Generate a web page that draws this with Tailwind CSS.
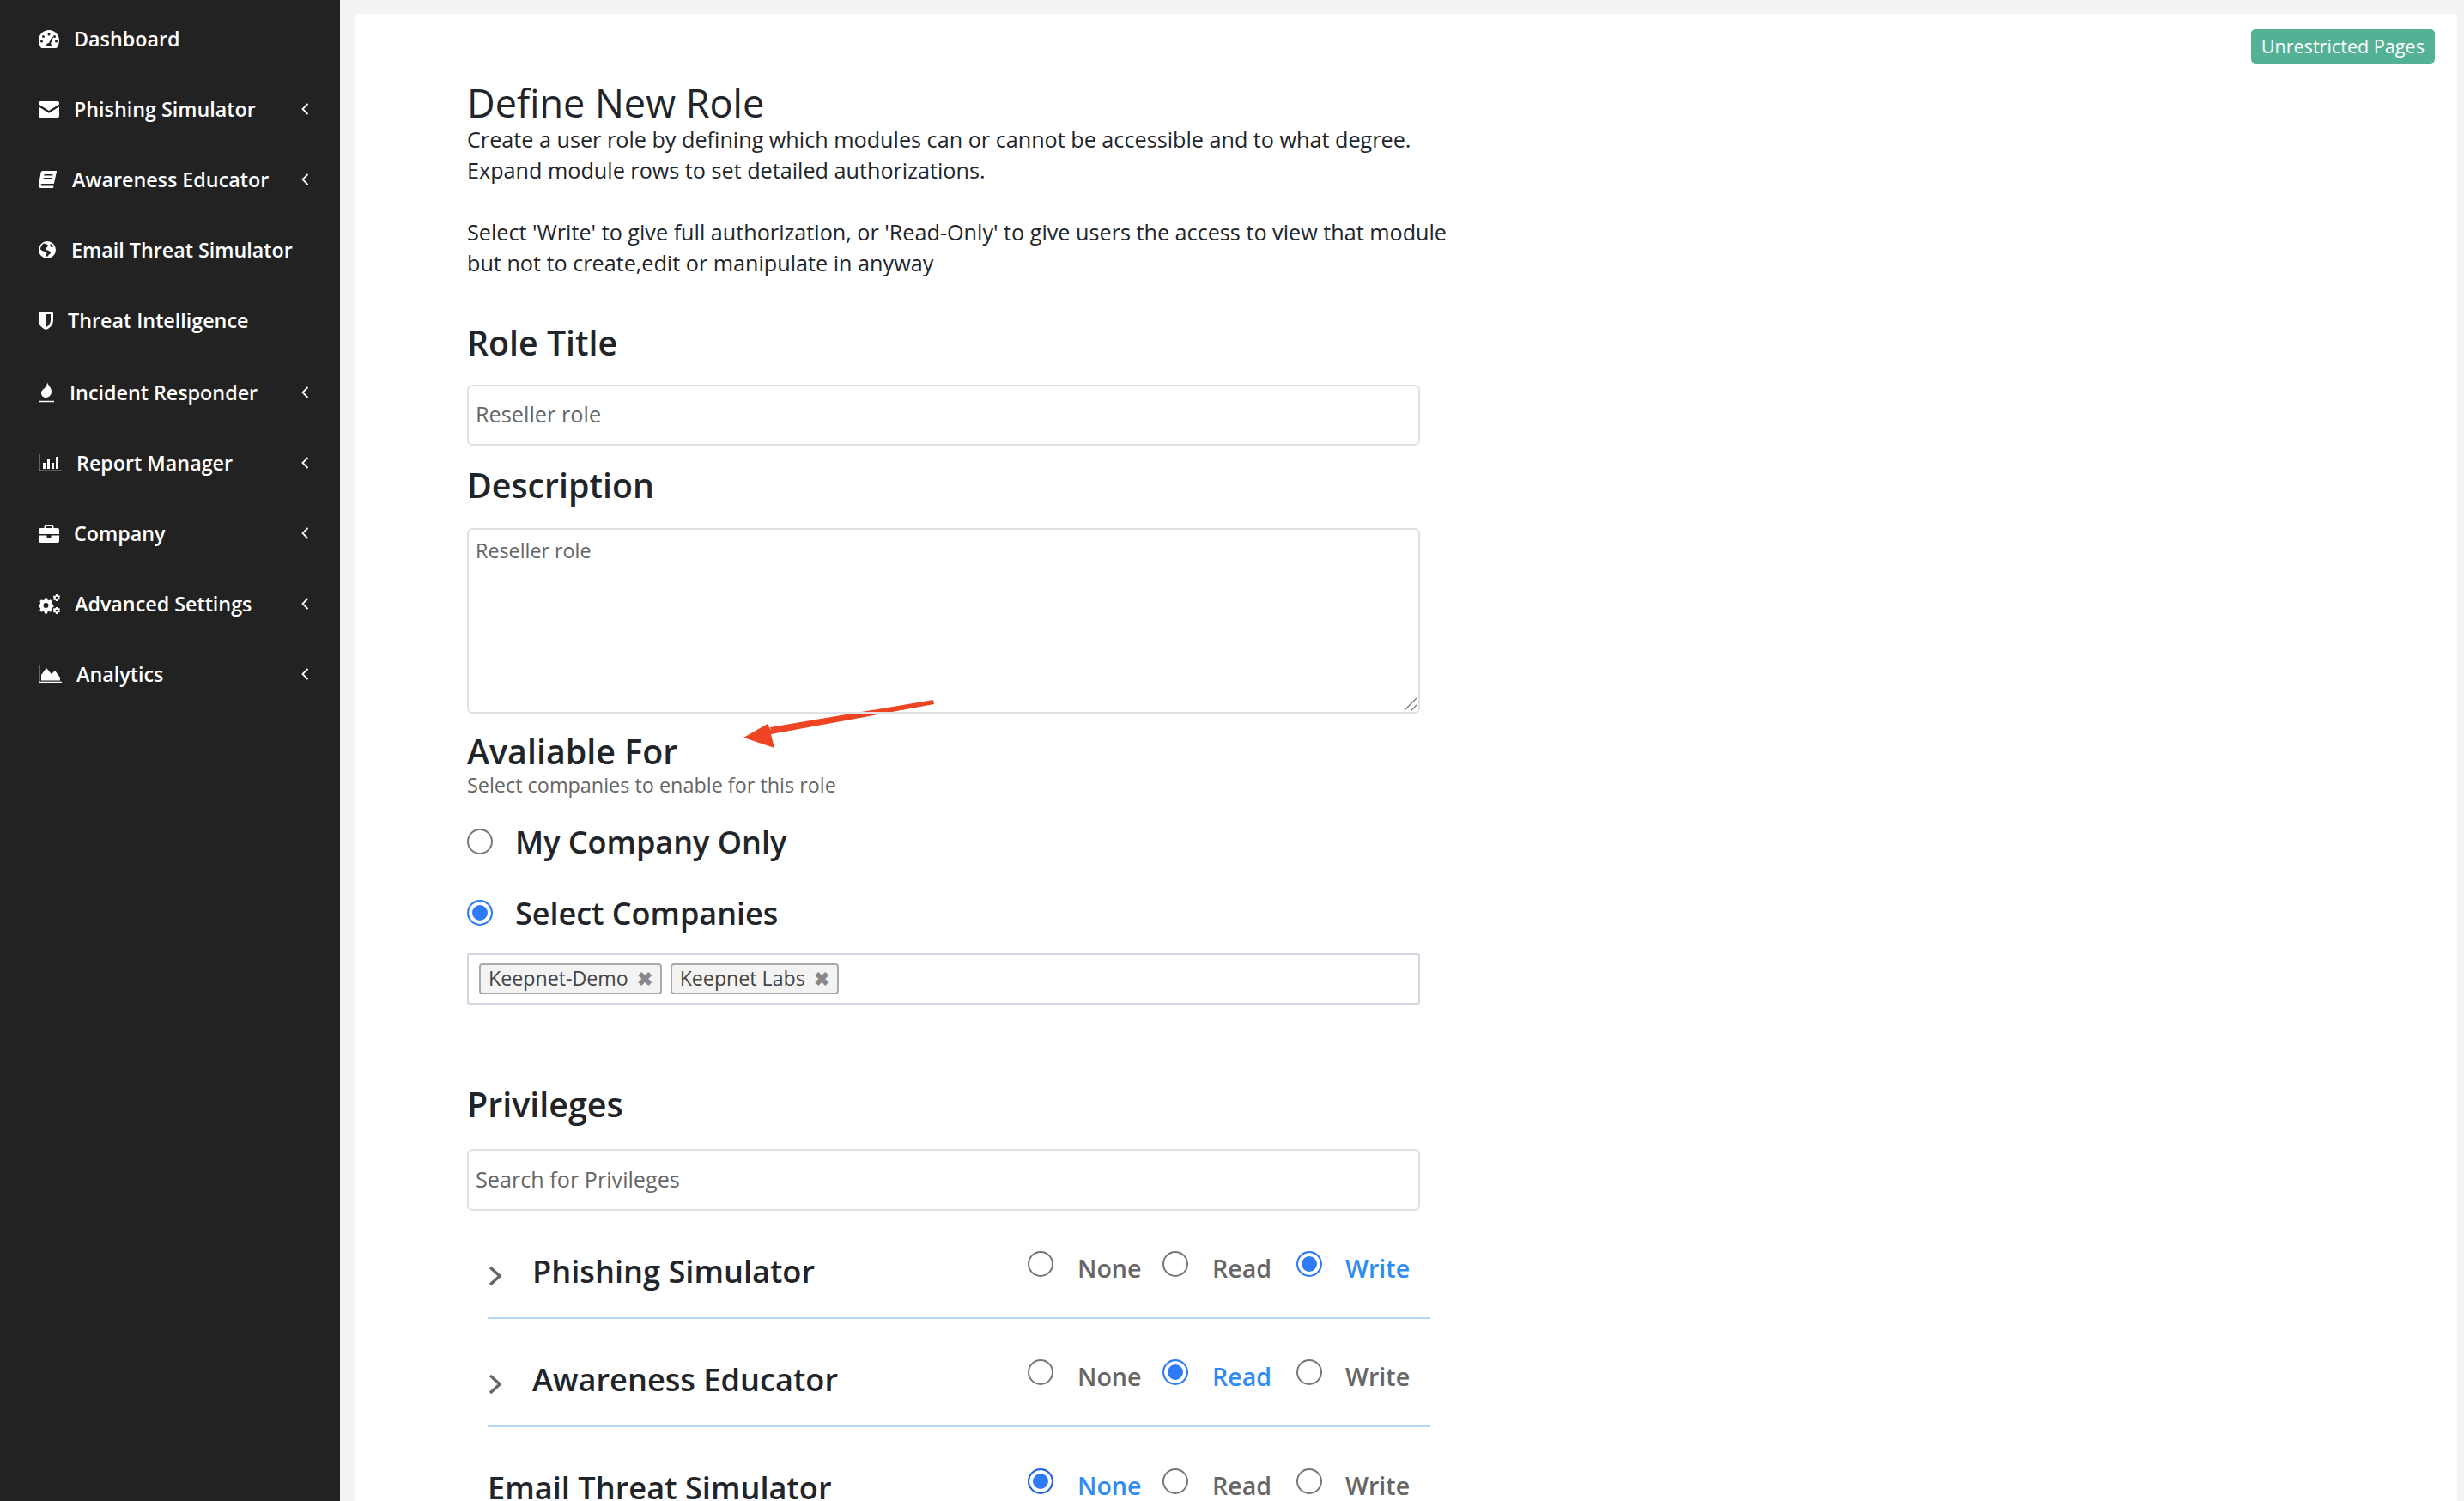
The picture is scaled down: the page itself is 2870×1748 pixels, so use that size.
<!DOCTYPE html>
<html lang="en">
<head>
    <meta charset="UTF-8">
    <title>Define New Role</title>
    <script src="https://cdn.jsdelivr.net/npm/@tailwindcss/browser@4"></script>
</head>
<body class="bg-[#f3f3f3] h-screen overflow-hidden flex font-['Open_Sans',sans-serif] text-[#212529]">
    <!-- sidebar -->
    <aside class="w-[396px] shrink-0 bg-[#222222] text-white font-semibold text-[23.3px] pt-[4px]">
        <a class="h-[82px] flex items-center pl-[45px] pr-[36px] gap-[17px]">
            <svg class="w-[24px] h-[21px]" viewBox="0 0 24 21" fill="currentColor"><path fill-rule="evenodd" d="M12 0C5.400 0 0 5.300 0 12c0 2.900 1 5.800 2.500 8.200.3.500.8.800 1.300.800h16.400c.5 0 1-.3 1.300-.8C23 17.800 24 14.900 24 12 24 5.300 18.600 0 12 0zM12 3.500a1.500 1.500 0 110 3 1.500 1.500 0 010-3zM5.500 6a1.500 1.500 0 110 3 1.500 1.500 0 010-3zm13 0a1.500 1.500 0 110 3 1.500 1.500 0 010-3zM3.500 11.500a1.500 1.500 0 110 3 1.500 1.500 0 010-3zm17 0a1.500 1.500 0 110 3 1.500 1.500 0 010-3zM15.500 7.500l1.500.5-3 7.800c.6.6 1 1.300 1 2.200h-6c0-1.700 1.300-3 3-3z"/></svg>
            <span>Dashboard</span>
        </a>
        <a class="h-[82px] flex items-center pl-[45px] pr-[36px] gap-[17px]">
            <svg class="w-[24px] h-[19px]" viewBox="0 0 24 19" fill="currentColor"><path d="M2 0h20a2 2 0 012 2v1.500L12 11 0 3.500V2a2 2 0 012-2zM0 6.200l12 7.500 12-7.500V17a2 2 0 01-2 2H2a2 2 0 01-2-2z"/></svg>
            <span>Phishing Simulator</span>
            <svg class="ml-auto w-[9px] h-[14px]" viewBox="0 0 9 14" fill="none" stroke="currentColor" stroke-width="1.800"><path d="M7.500 1L1.500 7l6 6"/></svg>
        </a>
        <a class="h-[82px] flex items-center pl-[45px] pr-[36px] gap-[18px]">
            <svg class="w-[21px] h-[20px]" viewBox="0 0 21 20" fill="currentColor"><path d="M5 0h15.500c.4 0 .6.300.5.700l-3 13.800c-.1.300-.3.500-.6.500H4.500c-1.400 0-2 .6-2.100 1.300-.1.700.5 1.200 1.400 1.200h13.700l-.5 2.500H3c-2 0-3.300-1.500-3-3.300L2.500 2C2.700.8 3.700 0 5 0zm1.500 4l-.3 1.500h10l.3-1.500zm-.8 4l-.3 1.500h10l.3-1.500z"/></svg>
            <span>Awareness Educator</span>
            <svg class="ml-auto w-[9px] h-[14px]" viewBox="0 0 9 14" fill="none" stroke="currentColor" stroke-width="1.800"><path d="M7.500 1L1.500 7l6 6"/></svg>
        </a>
        <a class="h-[82px] flex items-center pl-[45px] pr-[36px] gap-[18px]">
            <svg class="w-[20px] h-[20px]" viewBox="0 0 20 20" fill="currentColor"><path fill-rule="evenodd" d="M10 0a10 10 0 110 20 10 10 0 010-20zM6 2.500C3.500 4 2 6.700 2 9.500l3 2 3 .5 1.500 2-1 3 1.500 1 2-2.500 2-1.500-.5-2-3-1.500-2-.5-.5-2 2-1 1-2.500L8 3zM14 3l-1 2.500 2 1.500 2.500-.5C16.800 5 15.500 3.800 14 3z"/></svg>
            <span>Email Threat Simulator</span>
        </a>
        <a class="h-[82px] flex items-center pl-[45px] pr-[36px] gap-[17px]">
            <svg class="w-[17px] h-[21px]" viewBox="0 0 17 21" fill="currentColor"><path fill-rule="evenodd" d="M1 0h15a1 1 0 011 1v9c0 5-3.500 9-8.500 11C3.500 19 0 15 0 10V1a1 1 0 011-1zm7.500 3v15.200c3.300-1.700 5.500-4.800 5.500-8.200V3z"/></svg>
            <span>Threat Intelligence</span>
        </a>
        <a class="h-[82px] mt-[2px] flex items-center pl-[45px] pr-[36px] gap-[18px]">
            <svg class="w-[18px] h-[24px]" viewBox="0 0 18 24" fill="currentColor"><path d="M10 0c1 4 5 6 5 11 0 4-3 7-6.500 7C5 18 3 15.500 3 12.500 3 9 7 8 8.500 5 9.500 3.500 10 2 10 0zM0 21.800h18v1.400H0z"/></svg>
            <span>Incident Responder</span>
            <svg class="ml-auto w-[9px] h-[14px]" viewBox="0 0 9 14" fill="none" stroke="currentColor" stroke-width="1.800"><path d="M7.500 1L1.500 7l6 6"/></svg>
        </a>
        <a class="h-[82px] flex items-center pl-[45px] pr-[36px] gap-[17px]">
            <svg class="w-[27px] h-[20px]" viewBox="0 0 27 20" fill="currentColor"><path d="M0 0h1.300v18.700H27V20H0zM5 10h3v7H5zM10 6h3v11h-3zM15 10h3v7h-3zM20 3h3v14h-3z"/></svg>
            <span>Report Manager</span>
            <svg class="ml-auto w-[9px] h-[14px]" viewBox="0 0 9 14" fill="none" stroke="currentColor" stroke-width="1.800"><path d="M7.500 1L1.500 7l6 6"/></svg>
        </a>
        <a class="h-[82px] flex items-center pl-[45px] pr-[36px] gap-[17px]">
            <svg class="w-[24px] h-[21px]" viewBox="0 0 24 21" fill="currentColor"><path fill-rule="evenodd" d="M8 0h8a1.500 1.500 0 011.500 1.500V4H22a2 2 0 012 2v5H0V6a2 2 0 012-2h4.500V1.500A1.500 1.500 0 018 0zm.5 2v2h7V2zM0 12.500h9.500V15h5v-2.500H24V19a2 2 0 01-2 2H2a2 2 0 01-2-2z"/></svg>
            <span>Company</span>
            <svg class="ml-auto w-[9px] h-[14px]" viewBox="0 0 9 14" fill="none" stroke="currentColor" stroke-width="1.800"><path d="M7.500 1L1.500 7l6 6"/></svg>
        </a>
        <a class="h-[82px] flex items-center pl-[45px] pr-[36px] gap-[17px]">
            <svg class="w-[25px] h-[23px]" viewBox="0 0 25 23" fill="currentColor"><path fill-rule="evenodd" d="M7 4.500h3l.4 2 1.500.7 1.800-1 2 2-1 1.800.7 1.600 2 .4v3l-2 .4-.7 1.600 1 1.800-2 2-1.800-1-1.500.6-.4 2H7l-.4-2-1.600-.6-1.700 1-2.100-2 1-1.800-.6-1.600-2-.4v-3l2-.4.6-1.600-1-1.800 2.100-2 1.700 1 1.600-.7zM8.500 10a3 3 0 100 6 3 3 0 000-6z"/><path fill-rule="evenodd" d="M20 0h1.800l.3 1.100 1 .5 1-.5.900 1.300-.7.900v1.100l.7.900-.9 1.300-1-.5-1 .5L21.800 8H20l-.3-1.100-1-.5-1 .5-.9-1.300.7-.9V3.600l-.7-.9.9-1.300 1 .5 1-.5zm.9 2.800a1.200 1.200 0 100 2.400 1.200 1.200 0 000-2.400zM20 15h1.800l.3 1.100 1 .5 1-.5.900 1.300-.7.900v1.100l.7.900-.9 1.300-1-.5-1 .5-.3 1.400H20l-.3-1.400-1-.5-1 .5-.9-1.300.7-.9v-1.100l-.7-.9.9-1.300 1 .5 1-.5zm.9 2.800a1.200 1.200 0 100 2.400 1.200 1.200 0 000-2.400z"/></svg>
            <span>Advanced Settings</span>
            <svg class="ml-auto w-[9px] h-[14px]" viewBox="0 0 9 14" fill="none" stroke="currentColor" stroke-width="1.800"><path d="M7.500 1L1.500 7l6 6"/></svg>
        </a>
        <a class="h-[82px] flex items-center pl-[45px] pr-[36px] gap-[17px]">
            <svg class="w-[27px] h-[20px]" viewBox="0 0 27 20" fill="currentColor"><path d="M0 0h1.300v18.700H27V20H0zM3 17.500V11l6-8 6 7 4-4 6 8v3.500z"/></svg>
            <span>Analytics</span>
            <svg class="ml-auto w-[9px] h-[14px]" viewBox="0 0 9 14" fill="none" stroke="currentColor" stroke-width="1.800"><path d="M7.500 1L1.500 7l6 6"/></svg>
        </a>
    </aside>

    <!-- content -->
    <main class="relative flex-1 mt-[16px] ml-[18px] mr-[8px] bg-white pl-[130px] pt-[74px] overflow-hidden">
        <span class="absolute top-[18px] right-[26px] bg-[#55b196] text-white text-[21.6px] leading-[40px] h-[40px] px-[12px] rounded-[5px]">Unrestricted Pages</span>

        <svg class="absolute left-[440px] top-[790px] w-[240px] h-[70px]" viewBox="0 0 240 70" fill="#ee4423"><path d="M12 53l28-16 4 8-1-4 190-32 1 5-190 35 4 16z"/></svg>

        <div class="w-[1110px]">
            <h1 class="text-[45px] leading-[60px]">Define New Role</h1>
            <p class="text-[25.2px] leading-[36px] mt-[-6px] w-[1180px]">Create a user role by defining which modules can or cannot be accessible and to what degree.<br>Expand module rows to set detailed authorizations.</p>
            <p class="text-[25.2px] leading-[36px] mt-[36px] w-[1180px]">Select 'Write' to give full authorization, or 'Read-Only' to give users the access to view that module<br>but not to create,edit or manipulate in anyway</p>

            <h2 class="text-[39.3px] leading-[52px] font-semibold mt-[49px]">Role Title</h2>
            <input class="block w-full h-[71px] mt-[23px] border-2 border-[#dee2e6] rounded-[6px] px-[8px] pb-[3px] text-[25.3px] text-[#666]" value="Reseller role">

            <h2 class="text-[39.3px] leading-[52px] font-semibold mt-[20px]">Description</h2>
            <div class="relative mt-[24px] h-[216px]">
                <textarea class="block w-full h-full resize-none border-2 border-[#dee2e6] rounded-[6px] px-[8px] py-[7px] text-[23.3px] text-[#666]">Reseller role</textarea>
                <svg class="absolute right-[3px] bottom-[3px] w-[16px] h-[16px]" viewBox="0 0 16 16" stroke="#777" stroke-width="1.300"><path d="M1 15L15 1M9 15l6-6"/></svg>
            </div>

            <h2 class="text-[39.4px] leading-[52px] font-semibold mt-[18px]">Avaliable For</h2>
            <p class="text-[23.4px] leading-[32px] text-[#666] mt-[-3px]">Select companies to enable for this role</p>

            <label class="flex items-center gap-[26px] mt-[25px] h-[52px]">
                <input type="radio" name="scope" class="appearance-none w-[30px] h-[30px] mt-[-3px] rounded-full border-2 border-[#777] checked:border-[#2f7bf6] checked:bg-[#2f7bf6] checked:shadow-[inset_0_0_0_4px_white]">
                <span class="text-[36px] font-semibold">My Company Only</span>
            </label>
            <label class="flex items-center gap-[26px] mt-[31px] h-[52px]">
                <input type="radio" name="scope" checked class="appearance-none w-[30px] h-[30px] mt-[-3px] rounded-full border-2 border-[#777] checked:border-[#2f7bf6] checked:bg-[#2f7bf6] checked:shadow-[inset_0_0_0_4px_white]">
                <span class="text-[36px] font-semibold">Select Companies</span>
            </label>

            <div class="flex items-center gap-[10px] h-[60px] mt-[20px] border-2 border-[#cfd6dd] rounded-[3px] px-[12px]">
                <span class="flex items-center gap-[10px] h-[36px] px-[9px] pb-[2px] bg-[#f3f3f3] border-2 border-[#aaa] rounded-[4px] text-[23.2px] text-[#444]">Keepnet-Demo <span class="text-[#888] font-bold text-[22px]">&#10006;</span></span>
                <span class="flex items-center gap-[10px] h-[36px] px-[9px] pb-[2px] bg-[#f3f3f3] border-2 border-[#aaa] rounded-[4px] text-[23.2px] text-[#444]">Keepnet Labs <span class="text-[#888] font-bold text-[22px]">&#10006;</span></span>
            </div>

            <h2 class="text-[39.4px] leading-[52px] font-semibold mt-[90px]">Privileges</h2>
            <input class="block w-full h-[72px] mt-[26px] border-2 border-[#dee2e6] rounded-[6px] px-[8px] pb-[3px] text-[25.2px] placeholder:text-[#666]" placeholder="Search for Privileges">

            <div class="w-[1098px] ml-[24px] mt-[34px] h-[92px] flex border-b-2 border-[#b6d4f5]">
                <svg class="w-[18px] h-[24px] mt-[30px] ml-[1px] mr-[33px]" viewBox="0 0 18 24" fill="none" stroke="#666" stroke-width="3.500"><path d="M2 2l11 10L2 22"/></svg>
                <h3 class="text-[36.2px] font-semibold leading-[52px] mt-[10px]">Phishing Simulator</h3>
                <div class="ml-auto flex items-start pt-[13px] pr-[24px] text-[28.6px] font-semibold text-[#666]">
                    <input type="radio" name="phish" class="appearance-none w-[30px] h-[30px] mr-[28px] rounded-full border-2 border-[#777] checked:border-[#2f7bf6] checked:bg-[#2f7bf6] checked:shadow-[inset_0_0_0_4px_white]">
                    <span class="w-[99px] leading-[40px]">None</span>
                    <input type="radio" name="phish" class="appearance-none w-[30px] h-[30px] mr-[28px] rounded-full border-2 border-[#777] checked:border-[#2f7bf6] checked:bg-[#2f7bf6] checked:shadow-[inset_0_0_0_4px_white]">
                    <span class="w-[98px] leading-[40px]">Read</span>
                    <input type="radio" name="phish" checked class="appearance-none w-[30px] h-[30px] mr-[27px] rounded-full border-2 border-[#777] checked:border-[#2f7bf6] checked:bg-[#2f7bf6] checked:shadow-[inset_0_0_0_4px_white]">
                    <span class="w-[75px] leading-[40px] text-[#2f8cf0]">Write</span>
                </div>
            </div>

            <div class="w-[1098px] ml-[24px] mt-[34px] h-[92px] flex border-b-2 border-[#b6d4f5]">
                <svg class="w-[18px] h-[24px] mt-[30px] ml-[1px] mr-[33px]" viewBox="0 0 18 24" fill="none" stroke="#666" stroke-width="3.500"><path d="M2 2l11 10L2 22"/></svg>
                <h3 class="text-[36.2px] font-semibold leading-[52px] mt-[10px]">Awareness Educator</h3>
                <div class="ml-auto flex items-start pt-[13px] pr-[24px] text-[28.6px] font-semibold text-[#666]">
                    <input type="radio" name="aware" class="appearance-none w-[30px] h-[30px] mr-[28px] rounded-full border-2 border-[#777] checked:border-[#2f7bf6] checked:bg-[#2f7bf6] checked:shadow-[inset_0_0_0_4px_white]">
                    <span class="w-[99px] leading-[40px]">None</span>
                    <input type="radio" name="aware" checked class="appearance-none w-[30px] h-[30px] mr-[28px] rounded-full border-2 border-[#777] checked:border-[#2f7bf6] checked:bg-[#2f7bf6] checked:shadow-[inset_0_0_0_4px_white]">
                    <span class="w-[98px] leading-[40px] text-[#2f8cf0]">Read</span>
                    <input type="radio" name="aware" class="appearance-none w-[30px] h-[30px] mr-[27px] rounded-full border-2 border-[#777] checked:border-[#2f7bf6] checked:bg-[#2f7bf6] checked:shadow-[inset_0_0_0_4px_white]">
                    <span class="w-[75px] leading-[40px]">Write</span>
                </div>
            </div>

            <div class="w-[1098px] ml-[24px] mt-[34px] flex">
                <h3 class="text-[36.2px] font-semibold leading-[52px] mt-[10px]">Email Threat Simulator</h3>
                <div class="ml-auto flex items-start pt-[14px] pr-[24px] text-[28.6px] font-semibold text-[#666]">
                    <input type="radio" name="threat" checked class="appearance-none w-[30px] h-[30px] mr-[28px] rounded-full border-2 border-[#777] checked:border-[#1c63d8] checked:bg-[#2f7bf6] checked:shadow-[inset_0_0_0_4px_white]">
                    <span class="w-[99px] leading-[40px] text-[#2f8cf0]">None</span>
                    <input type="radio" name="threat" class="appearance-none w-[30px] h-[30px] mr-[28px] rounded-full border-2 border-[#777] checked:border-[#2f7bf6] checked:bg-[#2f7bf6] checked:shadow-[inset_0_0_0_4px_white]">
                    <span class="w-[98px] leading-[40px]">Read</span>
                    <input type="radio" name="threat" class="appearance-none w-[30px] h-[30px] mr-[27px] rounded-full border-2 border-[#777] checked:border-[#2f7bf6] checked:bg-[#2f7bf6] checked:shadow-[inset_0_0_0_4px_white]">
                    <span class="w-[75px] leading-[40px]">Write</span>
                </div>
            </div>
        </div>
    </main>
</body>
</html>
